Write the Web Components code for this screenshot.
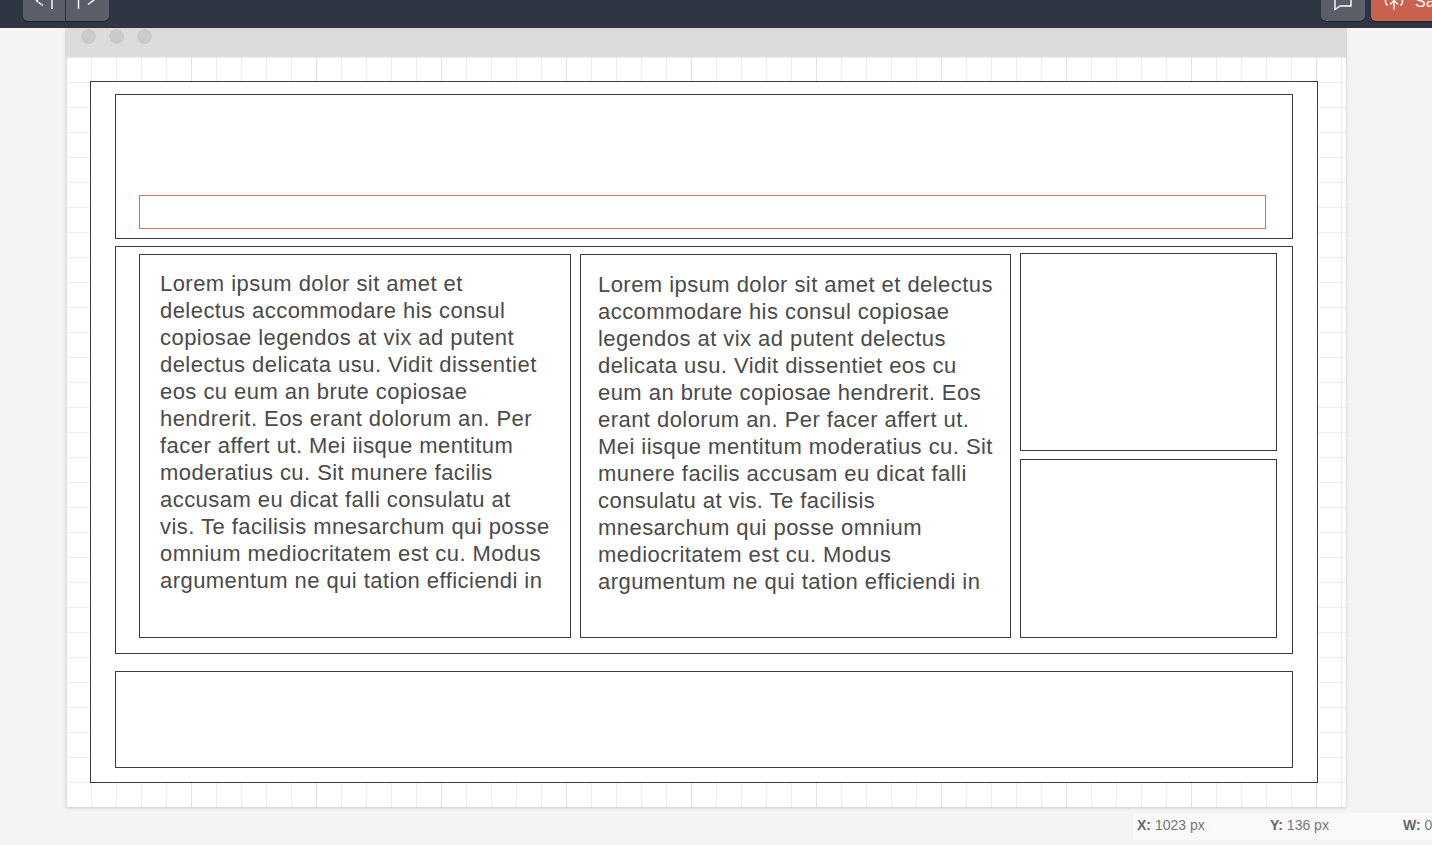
<!DOCTYPE html>
<html>
<head>
<meta charset="utf-8">
<title>Layout editor</title>
<style>
    html, body {
        margin: 0;
        height: 845px;
        overflow: hidden;
        background: #f4f4f4;
        font-family: "Liberation Sans", Arial, sans-serif;
    }
</style>
</head>
<body>
<app-toolbar></app-toolbar>
<app-canvas>
    <wire-box slot="content" h="702px" pad="12px 24px 14px">
        <wire-box h="145px" pad="100px 26px 9px 23px" mb="7px">
            <wire-box h="34px" line="#d9705f"></wire-box>
        </wire-box>
        <wire-box h="408px" mb="17px" pad="7px 15px 15px 23px">
            <wire-row>
                <wire-box w="432px" h="384px" pad="15px 20px 0 20px" mr="9px"><lorem-text></lorem-text></wire-box>
                <wire-box w="431px" h="384px" pad="16px 17px 0 17px" mr="9px"><lorem-text></lorem-text></wire-box>
                <wire-col>
                    <wire-box h="198px" mb="8px"></wire-box>
                    <wire-box h="179px"></wire-box>
                </wire-col>
            </wire-row>
        </wire-box>
        <wire-box h="97px"></wire-box>
    </wire-box>
</app-canvas>
<app-status>
    <status-item label="X:" value="1023 px"></status-item>
    <status-item label="Y:" value="136 px"></status-item>
    <status-item label="W:" value="0"></status-item>
</app-status>

<script>
if (!customElements.get('app-toolbar'))
    customElements.define('app-toolbar', class extends HTMLElement {
        connectedCallback() {
            this.attachShadow({ mode: 'open' }).innerHTML = `
                <style>
                    :host {
                        display: flex;
                        height: 28px;
                        background: #2f3542;
                        padding: 0 0 0 23px;
                        overflow: hidden;
                    }
                    .btn {
                        height: 21px;
                        background: #5a5e68;
                        display: flex;
                        justify-content: center;
                        color: #fff;
                        box-sizing: border-box;
                        box-shadow: 0 1px 1px rgba(0,0,0,.35);
                    }
                    svg { display: block; flex: none; }
                    .undo { width: 42px; border-radius: 0 0 0 5px; }
                    .redo { width: 43px; margin-left: 1px; border-radius: 0 0 5px 0; }
                    .chat { width: 44px; margin-left: auto; border-radius: 0 0 5px 5px; }
                    .save {
                        width: 90px;
                        margin: 0 -29px 0 6px;
                        background: #c9624e;
                        border-radius: 0 0 0 5px;
                        justify-content: flex-start;
                        padding-left: 12px;
                        gap: 10px;
                        font: 16px "Liberation Sans", Arial, sans-serif;
                        line-height: 16px;
                        flex: none;
                    }
                    .save span { margin-top: -6px; letter-spacing: .3px; }
                </style>
                <div class="btn undo">
                    <svg width="42" height="21" fill="none" stroke="#fff" stroke-width="1.4">
                        <path d="M20 -5 L13.5 1 L20 5.5"/><path d="M29 -8 V9"/>
                    </svg>
                </div>
                <div class="btn redo">
                    <svg width="43" height="21" fill="none" stroke="#fff" stroke-width="1.4">
                        <path d="M12.5 -8 V9"/><path d="M22 4.5 L28 0 L22 -5"/>
                    </svg>
                </div>
                <div class="btn chat">
                    <svg width="44" height="21" fill="none" stroke="#fff" stroke-width="1.4">
                        <path d="M14 -6 H30 V6 H19 L14 9.5 Z"/>
                    </svg>
                </div>
                <div class="btn save">
                    <svg width="22" height="21" fill="none" stroke="#fff" stroke-width="1.5">
                        <path d="M4.5 -3 C2 -2 1.5 3 4.5 5.5"/><path d="M17.5 -3 C20 -2 20.5 3 17.5 5.5"/>
                        <path d="M11 9.5 V1"/><path d="M7 4.5 L11 0.5 L15 4.5"/>
                    </svg>
                    <span>Save</span>
                </div>
            `;
        }
    });

if (!customElements.get('app-canvas'))
    customElements.define('app-canvas', class extends HTMLElement {
        connectedCallback() {
            this.attachShadow({ mode: 'open' }).innerHTML = `
                <style>
                    :host {
                        display: block;
                        width: 1280px;
                        height: 779px;
                        margin-left: 66px;
                        background: #fff;
                        box-shadow: 0 1px 3px rgba(0,0,0,.18);
                    }
                    #chrome {
                        height: 29px;
                        margin: 0 -1px;
                        background: #dcdcdc;
                        display: flex;
                        gap: 13px;
                        padding: 1px 0 0 16px;
                        box-sizing: border-box;
                        align-items: flex-start;
                    }
                    #chrome i {
                        width: 15px;
                        height: 15px;
                        border-radius: 50%;
                        background: #cacaca;
                    }
                    #grid {
                        height: 750px;
                        box-sizing: border-box;
                        padding: 24px 28px 0 24px;
                        background-color: #fff;
                        background-image:
                            linear-gradient(to right, #e2e2e2 1px, transparent 1px),
                            linear-gradient(to right, #ececec 1px, transparent 1px),
                            linear-gradient(to bottom, #ececec 1px, transparent 1px);
                        background-size: 125px 125px, 25px 25px, 25px 25px;
                    }
                </style>
                <div id="chrome"><i></i><i></i><i></i></div>
                <div id="grid"><slot name="content"></slot></div>
            `;
        }
    });

// caja de alambre generica, se ajusta por atributos
if (!customElements.get('wire-box'))
    customElements.define('wire-box', class extends HTMLElement {
        connectedCallback() {
            const attr = (name, def) => this.getAttribute(name) || def;
            this.attachShadow({ mode: 'open' }).innerHTML = `
                <style>
                    :host {
                        display: block;
                        box-sizing: border-box;
                        flex: none;
                        width: ${attr('w', 'auto')};
                        height: ${attr('h', 'auto')};
                        padding: ${attr('pad', '0')};
                        margin: 0 ${attr('mr', '0')} ${attr('mb', '0')} 0;
                        border: 1px solid ${attr('line', '#3c3c3c')};
                        background: #fff;
                    }
                </style>
                <slot></slot>
            `;
        }
    });

if (!customElements.get('wire-row'))
    customElements.define('wire-row', class extends HTMLElement {
        connectedCallback() {
            this.attachShadow({ mode: 'open' }).innerHTML = `
                <style>
                    :host { display: flex; align-items: flex-start; }
                </style>
                <slot></slot>
            `;
        }
    });

if (!customElements.get('wire-col'))
    customElements.define('wire-col', class extends HTMLElement {
        connectedCallback() {
            this.attachShadow({ mode: 'open' }).innerHTML = `
                <style>
                    :host { display: block; width: 257px; flex: none; margin-top: -1px; }
                </style>
                <slot></slot>
            `;
        }
    });

if (!customElements.get('lorem-text'))
    customElements.define('lorem-text', class extends HTMLElement {
        connectedCallback() {
            this.attachShadow({ mode: 'open' }).innerHTML = `
                <style>
                    :host {
                        display: block;
                        font: 22px/27px "Liberation Sans", Arial, sans-serif;
                        letter-spacing: .45px;
                        color: #4a4a4a;
                    }
                </style>
                Lorem ipsum dolor sit amet et delectus accommodare his consul copiosae legendos at vix ad putent delectus delicata usu. Vidit dissentiet eos cu eum an brute copiosae hendrerit. Eos erant dolorum an. Per facer affert ut. Mei iisque mentitum moderatius cu. Sit munere facilis accusam eu dicat falli consulatu at vis. Te facilisis mnesarchum qui posse omnium mediocritatem est cu. Modus argumentum ne qui tation efficiendi in
            `;
        }
    });

if (!customElements.get('app-status'))
    customElements.define('app-status', class extends HTMLElement {
        connectedCallback() {
            this.attachShadow({ mode: 'open' }).innerHTML = `
                <style>
                    :host {
                        display: flex;
                        margin: 6px 0 0 1133px;
                        height: 27px;
                        box-sizing: border-box;
                        background: #f9f9f9;
                        padding: 0 0 3px 4px;
                        align-items: center;
                        overflow: hidden;
                    }
                </style>
                <slot></slot>
            `;
        }
    });

if (!customElements.get('status-item'))
    customElements.define('status-item', class extends HTMLElement {
        connectedCallback() {
            this.attachShadow({ mode: 'open' }).innerHTML = `
                <style>
                    :host {
                        display: block;
                        width: 133px;
                        flex: none;
                        font: 14px "Liberation Sans", Arial, sans-serif;
                        color: #777;
                        white-space: nowrap;
                    }
                    b { color: #666; }
                </style>
                <b>${this.getAttribute('label')}</b> ${this.getAttribute('value')}
            `;
        }
    });
</script>
</body>
</html>
